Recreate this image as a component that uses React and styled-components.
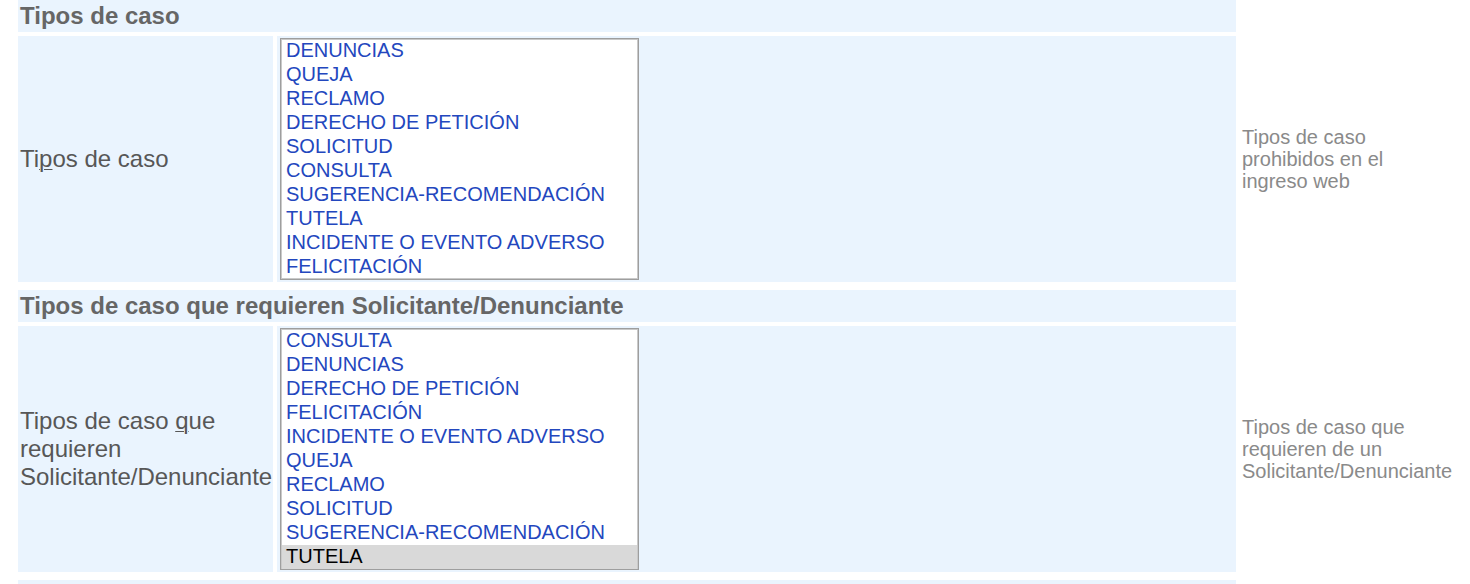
import React from "react";
import styled, { createGlobalStyle } from "styled-components";

const Global = createGlobalStyle`
  html, body { margin: 0; padding: 0; background: #ffffff; }
  body { font-family: "Liberation Sans", Arial, Helvetica, sans-serif; }
`;

const Page = styled.div`
  padding: 0 0 0 18px;
  display: flex;
  flex-direction: column;
  gap: 8px;
`;

const Section = styled.section`
  display: grid;
  grid-template-columns: 255px 959px 226px;
  grid-template-rows: 32px auto;
  column-gap: 4px;
  row-gap: 4px;
`;

const Header = styled.h2`
  grid-column: 1 / 3;
  grid-row: 1;
  margin: 0;
  padding: 2px;
  height: 32px;
  box-sizing: border-box;
  background: #eaf4fe;
  color: #666666;
  font-size: 24px;
  line-height: 28px;
  font-weight: bold;
`;

const LabelCell = styled.label`
  grid-column: 1;
  grid-row: 2;
  display: flex;
  align-items: center;
  padding: 2px;
  background: #eaf4fe;
  color: #575757;
  font-size: 24px;
  line-height: 28px;
  white-space: nowrap;
  u { text-decoration-thickness: 1px; text-underline-offset: 2px; }
`;

const FieldCell = styled.div`
  grid-column: 2;
  grid-row: 2;
  padding: 2px 2px 2px 3px;
  background: #eaf4fe;
  display: flex;
  align-items: flex-start;
`;

const ListBox = styled.div`
  width: 359px;
  height: 242px;
  box-sizing: border-box;
  border: 1px solid #9e9e9e;
  box-shadow: inset 0 0 0 1px #c9c9c9;
  background: #ffffff;
  overflow: hidden;
  display: flex;
  flex-direction: column;
  flex-shrink: 0;
`;

const Option = styled.div`
  height: 24px;
  flex-shrink: 0;
  box-sizing: border-box;
  padding: 0 4px 1px;
  font-size: 20px;
  line-height: 23px;
  white-space: nowrap;
  color: ${(p) => (p.$selected ? "#000000" : "#2347be")};
  background: ${(p) => (p.$selected ? "#d9d9d9" : "transparent")};
  margin: 0 1px;
`;

const HelpCell = styled.div`
  grid-column: 3;
  grid-row: 2;
  display: flex;
  align-items: center;
  padding: 2px;
  color: #8a8a8a;
  font-size: 20px;
  line-height: 22px;
  white-space: nowrap;
`;

const sections = [
  {
    title: "Tipos de caso",
    label: (
      <>
        Ti<u>p</u>os de caso
      </>
    ),
    options: [
      "DENUNCIAS",
      "QUEJA",
      "RECLAMO",
      "DERECHO DE PETICIÓN",
      "SOLICITUD",
      "CONSULTA",
      "SUGERENCIA-RECOMENDACIÓN",
      "TUTELA",
      "INCIDENTE O EVENTO ADVERSO",
      "FELICITACIÓN",
    ],
    selected: [],
    help: (
      <>
        Tipos de caso
        <br />
        prohibidos en el
        <br />
        ingreso web
      </>
    ),
  },
  {
    title: "Tipos de caso que requieren Solicitante/Denunciante",
    label: (
      <>
        Tipos de caso <u>q</u>ue
        <br />
        requieren
        <br />
        Solicitante/Denunciante
      </>
    ),
    options: [
      "CONSULTA",
      "DENUNCIAS",
      "DERECHO DE PETICIÓN",
      "FELICITACIÓN",
      "INCIDENTE O EVENTO ADVERSO",
      "QUEJA",
      "RECLAMO",
      "SOLICITUD",
      "SUGERENCIA-RECOMENDACIÓN",
      "TUTELA",
    ],
    selected: ["TUTELA"],
    help: (
      <>
        Tipos de caso que
        <br />
        requieren de un
        <br />
        Solicitante/Denunciante
      </>
    ),
  },
];

export default function App() {
  return (
    <>
      <Global />
      <Page>
        {sections.map((s, i) => (
          <Section key={i}>
            <Header>{s.title}</Header>
            <LabelCell>
              <span>{s.label}</span>
            </LabelCell>
            <FieldCell>
              <ListBox role="listbox" aria-multiselectable="true">
                {s.options.map((o) => (
                  <Option
                    key={o}
                    role="option"
                    $selected={s.selected.includes(o)}
                    aria-selected={s.selected.includes(o)}
                  >
                    {o}
                  </Option>
                ))}
              </ListBox>
            </FieldCell>
            <HelpCell>
              <span>{s.help}</span>
            </HelpCell>
          </Section>
        ))}
        <Section>
          <Header>&nbsp;</Header>
        </Section>
      </Page>
    </>
  );
}
